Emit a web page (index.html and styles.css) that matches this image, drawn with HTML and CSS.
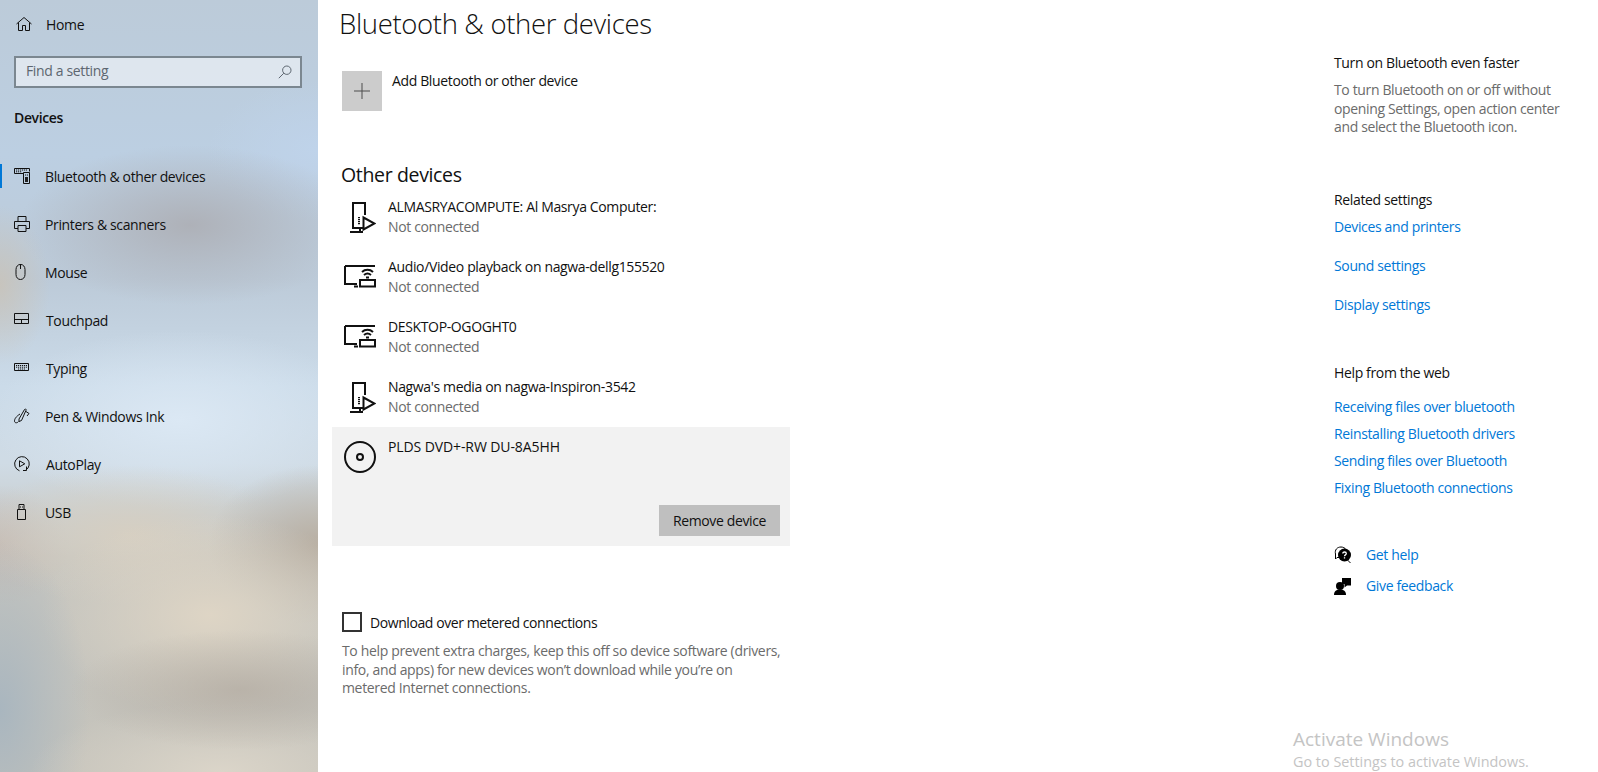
FILE: index.html
```html
<!DOCTYPE html>
<html lang="en">
<head>
    <meta charset="UTF-8">
    <title>Settings - Bluetooth &amp; other devices</title>
    <link rel="stylesheet" href="styles.css">
</head>
<body>
    <div class="sidebar">
        <a class="home-link">
            <svg class="nav-icon" viewBox="0 0 16 16"><path d="M.5 8L8 1.500l7.500 6.500M2.500 6.500V14.500H6.500V9.500H9.500V14.500H13.500V6.500"/></svg>
            <span>Home</span>
        </a>
        <div class="search-box">
            <span class="search-text">Find a setting</span>
            <svg class="search-icon" viewBox="0 0 14 14"><circle cx="8.800" cy="5.200" r="4.200"/><path d="M5.800 8.200L.8 13.200"/></svg>
        </div>
        <div class="sidebar-title">Devices</div>
        <nav class="nav-list">
            <a class="nav-item active">
                <svg class="nav-icon" viewBox="0 0 16 16"><path d="M9.500 5.500H.5V.5H15.500V3.500M9.500 4.500H15.500V15.500H9.500Z"/><path class="dots" d="M2 2h11M2 3.800h6M11 7h3"/><path class="solid" d="M11 9h3v5h-3z"/></svg>
                <span>Bluetooth &amp; other devices</span>
            </a>
            <a class="nav-item">
                <svg class="nav-icon" viewBox="0 0 16 16"><path d="M4 5V.5H12V5M4 12.500H.5V5.500H15.500V12.500H12M4 9.500H12V15.500H4Z"/></svg>
                <span>Printers &amp; scanners</span>
            </a>
            <a class="nav-item">
                <svg class="nav-icon" viewBox="0 0 16 16"><path d="M2 5.500C2 2.500 4 .5 6 .5H7C9 .5 11 2.500 11 5.500V10.500C11 13.500 9 15.500 6.500 15.500S2 13.500 2 10.500ZM6.500 .5V5"/></svg>
                <span>Mouse</span>
            </a>
            <a class="nav-item item-shift">
                <svg class="nav-icon" viewBox="0 0 16 16"><path d="M.5 1.500H14.500V11.500H.5ZM.5 7.500H14.500M7.500 7.500V11.500"/></svg>
                <span>Touchpad</span>
            </a>
            <a class="nav-item item-shift">
                <svg class="nav-icon" viewBox="0 0 16 16"><path d="M.5 3.500H14.500V10.500H.5Z"/><path class="dots" d="M2 5.500h11M2 7.200h11M4 9h7"/></svg>
                <span>Typing</span>
            </a>
            <a class="nav-item">
                <svg class="nav-icon" viewBox="0 0 16 16"><path d="M5 11L10.500 1.500C11 .5 12.500 1 12 2.300L7.500 12.500L5 13.500ZM12 3.500L15 5.500L13 8M6 6C2 8.500 .5 11 .5 13C.5 15 3 15.500 4.500 13.500"/></svg>
                <span>Pen &amp; Windows Ink</span>
            </a>
            <a class="nav-item item-shift">
                <svg class="nav-icon" viewBox="0 0 16 16"><path d="M5.500 14.800A7.300 7.300 0 1 1 11.500 14.300M12.500 10.500V14.500H9"/><path d="M5.500 4.800L10.800 7.800L5.500 10.800Z"/></svg>
                <span>AutoPlay</span>
            </a>
            <a class="nav-item">
                <svg class="nav-icon" viewBox="0 0 16 16"><path d="M3.500 5.500H11.500V15.500H3.500ZM5 5.500V.5H10V5.500M6.500 2.500V3.500M8.500 2.500V3.500"/></svg>
                <span>USB</span>
            </a>
        </nav>
    </div>

    <div class="content">
        <div class="main-column">
            <h1>Bluetooth &amp; other devices</h1>

            <div class="add-device">
                <div class="add-tile">
                    <svg viewBox="0 0 20 20"><path d="M10 2V18M2 10H18"/></svg>
                </div>
                <span>Add Bluetooth or other device</span>
            </div>

            <h2>Other devices</h2>

            <div class="device-list">
                <div class="device-row">
                    <svg class="device-icon"><use href="#icon-media"/></svg>
                    <div>
                        <div class="device-name">ALMASRYACOMPUTE: Al Masrya Computer:</div>
                        <div class="device-status">Not connected</div>
                    </div>
                </div>
                <div class="device-row">
                    <svg class="device-icon"><use href="#icon-display"/></svg>
                    <div>
                        <div class="device-name">Audio/Video playback on nagwa-dellg155520</div>
                        <div class="device-status">Not connected</div>
                    </div>
                </div>
                <div class="device-row">
                    <svg class="device-icon"><use href="#icon-display"/></svg>
                    <div>
                        <div class="device-name">DESKTOP-OGOGHT0</div>
                        <div class="device-status">Not connected</div>
                    </div>
                </div>
                <div class="device-row">
                    <svg class="device-icon"><use href="#icon-media"/></svg>
                    <div>
                        <div class="device-name">Nagwa's media on nagwa-Inspiron-3542</div>
                        <div class="device-status">Not connected</div>
                    </div>
                </div>
                <div class="device-row selected">
                    <svg class="device-icon" viewBox="0 0 32 32"><circle cx="16" cy="16" r="15"/><circle cx="16" cy="16" r="3"/></svg>
                    <div class="device-name caps">PLDS DVD+-RW DU-8A5HH</div>
                    <button class="remove-button">Remove device</button>
                </div>
            </div>

            <label class="metered">
                <span class="checkbox"></span>
                <span>Download over metered connections</span>
            </label>
            <p class="metered-note">To help prevent extra charges, keep this off so device software (drivers, info, and apps) for new devices won’t download while you’re on metered Internet connections.</p>
        </div>

        <div class="side-column">
            <div class="side-heading first">Turn on Bluetooth even faster</div>
            <p class="side-note">To turn Bluetooth on or off without opening Settings, open action center and select the Bluetooth icon.</p>

            <div class="side-heading related">Related settings</div>
            <a class="side-link wide">Devices and printers</a>
            <a class="side-link wide">Sound settings</a>
            <a class="side-link wide">Display settings</a>

            <div class="side-heading web">Help from the web</div>
            <a class="side-link">Receiving files over bluetooth</a>
            <a class="side-link">Reinstalling Bluetooth drivers</a>
            <a class="side-link">Sending files over Bluetooth</a>
            <a class="side-link">Fixing Bluetooth connections</a>

            <div class="help-links">
                <a class="help-row">
                    <svg viewBox="0 0 18 18"><path class="outline" d="M7 11.500H3L1.500 13V8C.5 4 3 1 7 1C9 1 11 2 12 3.500"/><circle cx="10.500" cy="9" r="6.500"/><path class="outline" d="M13.500 14L16.500 17"/><path class="mark" d="M8.800 7.500C8.800 5.500 12.300 5.500 12.300 7.500C12.300 9 10.500 8.800 10.500 10.300M10.500 11.300V12.500"/></svg>
                    <span class="side-link">Get help</span>
                </a>
                <a class="help-row">
                    <svg viewBox="0 0 18 18"><circle cx="6" cy="9" r="4"/><path d="M0 18C0 14 2.500 12.500 6 12.500S12 14 12 18Z"/><path d="M8 1H17V8.500H13L10.500 10.500V7H8Z"/></svg>
                    <span class="side-link">Give feedback</span>
                </a>
            </div>
        </div>
    </div>

    <!-- shared device glyphs -->
    <svg class="icon-defs">
        <symbol id="icon-media" viewBox="0 0 32 32">
            <path d="M9 28V2H21V14M9 27H19M16 27V31M6 31H19"/>
            <path d="M19.500 16.500L30.500 22.500L19.500 28.500Z"/>
            <path class="dots" d="M15 16V24"/>
        </symbol>
        <symbol id="icon-display" viewBox="0 0 32 32">
            <path d="M1 5H31M1 5V23H13M10 25.500H14M16 19H31V25.500H16Z"/>
            <path class="arcs" d="M18 11A8 8 0 0 1 29 11M20 14A5.500 5.500 0 0 1 27 14M22 16.500H25"/>
        </symbol>
    </svg>

    <div class="watermark">
        <div class="watermark-title">Activate Windows</div>
        <div class="watermark-text">Go to Settings to activate Windows.</div>
    </div>
</body>
</html>
```

FILE: styles.css
```css
html, body {
    margin: 0;
    padding: 0;
    height: 772px;
    overflow: hidden;
}
body {
    display: flex;
    font-family: "Open Sans", "Noto Sans", sans-serif;
    font-size: 14px;
    letter-spacing: -0.36px;
    color: #111;
    background-color: #fff;
}
svg {
    fill: none;
    stroke: currentColor;
}

/* left pane */
.sidebar {
    width: 318px;
    flex-shrink: 0;
    height: 772px;
    box-sizing: border-box;
    padding-top: 12px;
    background:
        radial-gradient(ellipse 170px 60px at 240px 690px, rgba(178, 170, 160, 0.7) 0%, rgba(178, 170, 160, 0) 100%),
        radial-gradient(ellipse 190px 70px at 220px 772px, #dbd5c9 0%, rgba(219, 213, 201, 0) 100%),
        radial-gradient(ellipse 90px 170px at 0 710px, #a9b6bf 0%, rgba(169, 182, 191, 0) 100%),
        radial-gradient(ellipse 170px 100px at 210px 615px, #ded5c5 0%, rgba(222, 213, 197, 0) 100%),
        radial-gradient(ellipse 110px 80px at 318px 545px, #b8afa3 0%, rgba(184, 175, 163, 0) 100%),
        radial-gradient(ellipse 160px 70px at 130px 535px, #d6cfc2 0%, rgba(214, 207, 194, 0) 100%),
        radial-gradient(ellipse 70px 60px at 0 545px, rgba(196, 185, 178, 0.8) 0%, rgba(196, 185, 178, 0) 100%),
        radial-gradient(ellipse 190px 90px at 180px 420px, #dbe8f4 0%, rgba(219, 232, 244, 0) 100%),
        radial-gradient(ellipse 170px 80px at 190px 225px, #aeb1b8 0%, rgba(174, 177, 184, 0) 100%),
        radial-gradient(ellipse 50px 80px at 0 285px, rgba(203, 194, 180, 0.75) 0%, rgba(203, 194, 180, 0) 100%),
        radial-gradient(ellipse 110px 70px at 318px 150px, #bfd3ea 0%, rgba(191, 211, 234, 0) 100%),
        linear-gradient(180deg, #bccbd9 0%, #bccfe2 20%, #bccad8 36%, #cbdbe9 50%, #cfdbe5 60%, #c5c5c0 72%, #c5c3bb 100%);
}
.home-link {
    display: flex;
    align-items: center;
    height: 24px;
    padding-left: 16px;
}
.home-link span {
    margin-left: 14px;
}
.search-box {
    display: flex;
    align-items: center;
    justify-content: space-between;
    box-sizing: border-box;
    width: 288px;
    height: 32px;
    margin: 20px 0 0 14px;
    padding: 0 8px 0 10px;
    border: 2px solid #7b8790;
    background-color: rgba(255, 255, 255, 0.5);
    color: #5d6670;
}
.search-text {
    padding-bottom: 4px;
}
.search-icon {
    width: 14px;
    height: 14px;
    stroke: #5d6670;
}
.sidebar-title {
    margin: 19px 0 0 14px;
    line-height: 22px;
    font-weight: 600;
}
.nav-list {
    margin-top: 23px;
}
.nav-item {
    display: flex;
    align-items: center;
    height: 48px;
    padding-left: 14px;
    position: relative;
}
.nav-item span {
    margin-left: 15px;
}
.item-shift span {
    margin-left: 16px;
}
.nav-item.active::before {
    content: "";
    position: absolute;
    left: 0;
    top: 12px;
    width: 2px;
    height: 24px;
    background-color: #0078d7;
}
.nav-icon {
    width: 16px;
    height: 16px;
    flex-shrink: 0;
}
.dots {
    stroke-dasharray: 1.200 .8;
}
.solid {
    fill: #222;
    stroke: none;
}

/* right pane */
.content {
    flex: 1;
    display: flex;
    justify-content: space-between;
}
.main-column {
    width: 460px;
    padding-left: 22px;
}
h1 {
    margin: 6px 0 0 -1px;
    font-size: 27.500px;
    line-height: 36px;
    font-weight: 300;
    letter-spacing: -0.35px;
}
h2 {
    margin: 51px 0 0 1px;
    font-size: 19.500px;
    line-height: 25px;
    font-weight: 400;
    letter-spacing: -0.35px;
}
.add-device {
    display: flex;
    margin: 29px 0 0 2px;
}
.add-device span {
    margin-left: 10px;
    line-height: 20px;
}
.add-tile {
    width: 40px;
    height: 40px;
    display: flex;
    align-items: center;
    justify-content: center;
    background-color: #cccccc;
    color: #4d4d4d;
}
.add-tile svg {
    width: 20px;
    height: 20px;
}

.device-list {
    margin-left: -8px;
    width: 458px;
}
.device-row {
    display: flex;
    box-sizing: border-box;
    height: 60px;
    padding: 10px 0 0 12px;
}
.device-row.selected {
    position: relative;
    height: 119px;
    background-color: #f2f2f2;
}
.device-icon {
    width: 32px;
    height: 32px;
    margin: 4px 12px 0 0;
    stroke-width: 2;
    flex-shrink: 0;
}
.device-icon .arcs {
    stroke-width: 1.500;
}
.device-name {
    line-height: 20px;
}
.device-name.caps {
    letter-spacing: -0.1px;
}
.device-status {
    line-height: 20px;
    color: #6b6b6b;
}
.remove-button {
    position: absolute;
    right: 10px;
    bottom: 10px;
    width: 121px;
    height: 31px;
    border: none;
    padding: 0;
    background-color: #bfbfbf;
    font: inherit;
    letter-spacing: inherit;
    color: #111;
}
.metered {
    display: flex;
    align-items: center;
    margin: 66px 0 0 2px;
    letter-spacing: -0.42px;
}
.checkbox {
    box-sizing: border-box;
    width: 20px;
    height: 20px;
    margin-right: 8px;
    border: 2px solid #333;
}
.metered-note {
    margin: 10px 0 0 2px;
    width: 440px;
    line-height: 18.500px;
    letter-spacing: -0.34px;
    color: #6b6b6b;
}

.side-column {
    width: 264px;
}
.side-heading {
    line-height: 20px;
}
.side-heading.first {
    margin-top: 53px;
}
.side-heading.related {
    margin-top: 53px;
}
.side-heading.web {
    margin-top: 48px;
    margin-bottom: 14px;
}
.side-note {
    margin: 8px 0 0 0;
    width: 240px;
    line-height: 18.500px;
    color: #6b6b6b;
}
.side-link {
    display: block;
    line-height: 20px;
    margin-top: 7px;
    color: #0078d7;
}
.side-link.wide {
    margin-top: 7px;
    margin-bottom: 19px;
}
.help-links {
    margin-top: 42px;
}
.help-row {
    display: flex;
    align-items: center;
    height: 31px;
}
.help-row svg {
    width: 18px;
    height: 18px;
    margin-right: 14px;
    fill: #000;
    stroke: none;
}
.help-row .side-link {
    margin: 0;
}
.help-row .outline {
    fill: none;
    stroke: #000;
}
.help-row .mark {
    fill: none;
    stroke: #fff;
    stroke-width: 1.300;
}
.icon-defs {
    position: absolute;
    width: 0;
    height: 0;
}
.watermark {
    position: absolute;
    left: 1293px;
    top: 727px;
    color: #c4c4c4;
    letter-spacing: 0;
}
.watermark-title {
    font-size: 19px;
    line-height: 24px;
}
.watermark-text {
    font-size: 14.400px;
    line-height: 22px;
}
```
